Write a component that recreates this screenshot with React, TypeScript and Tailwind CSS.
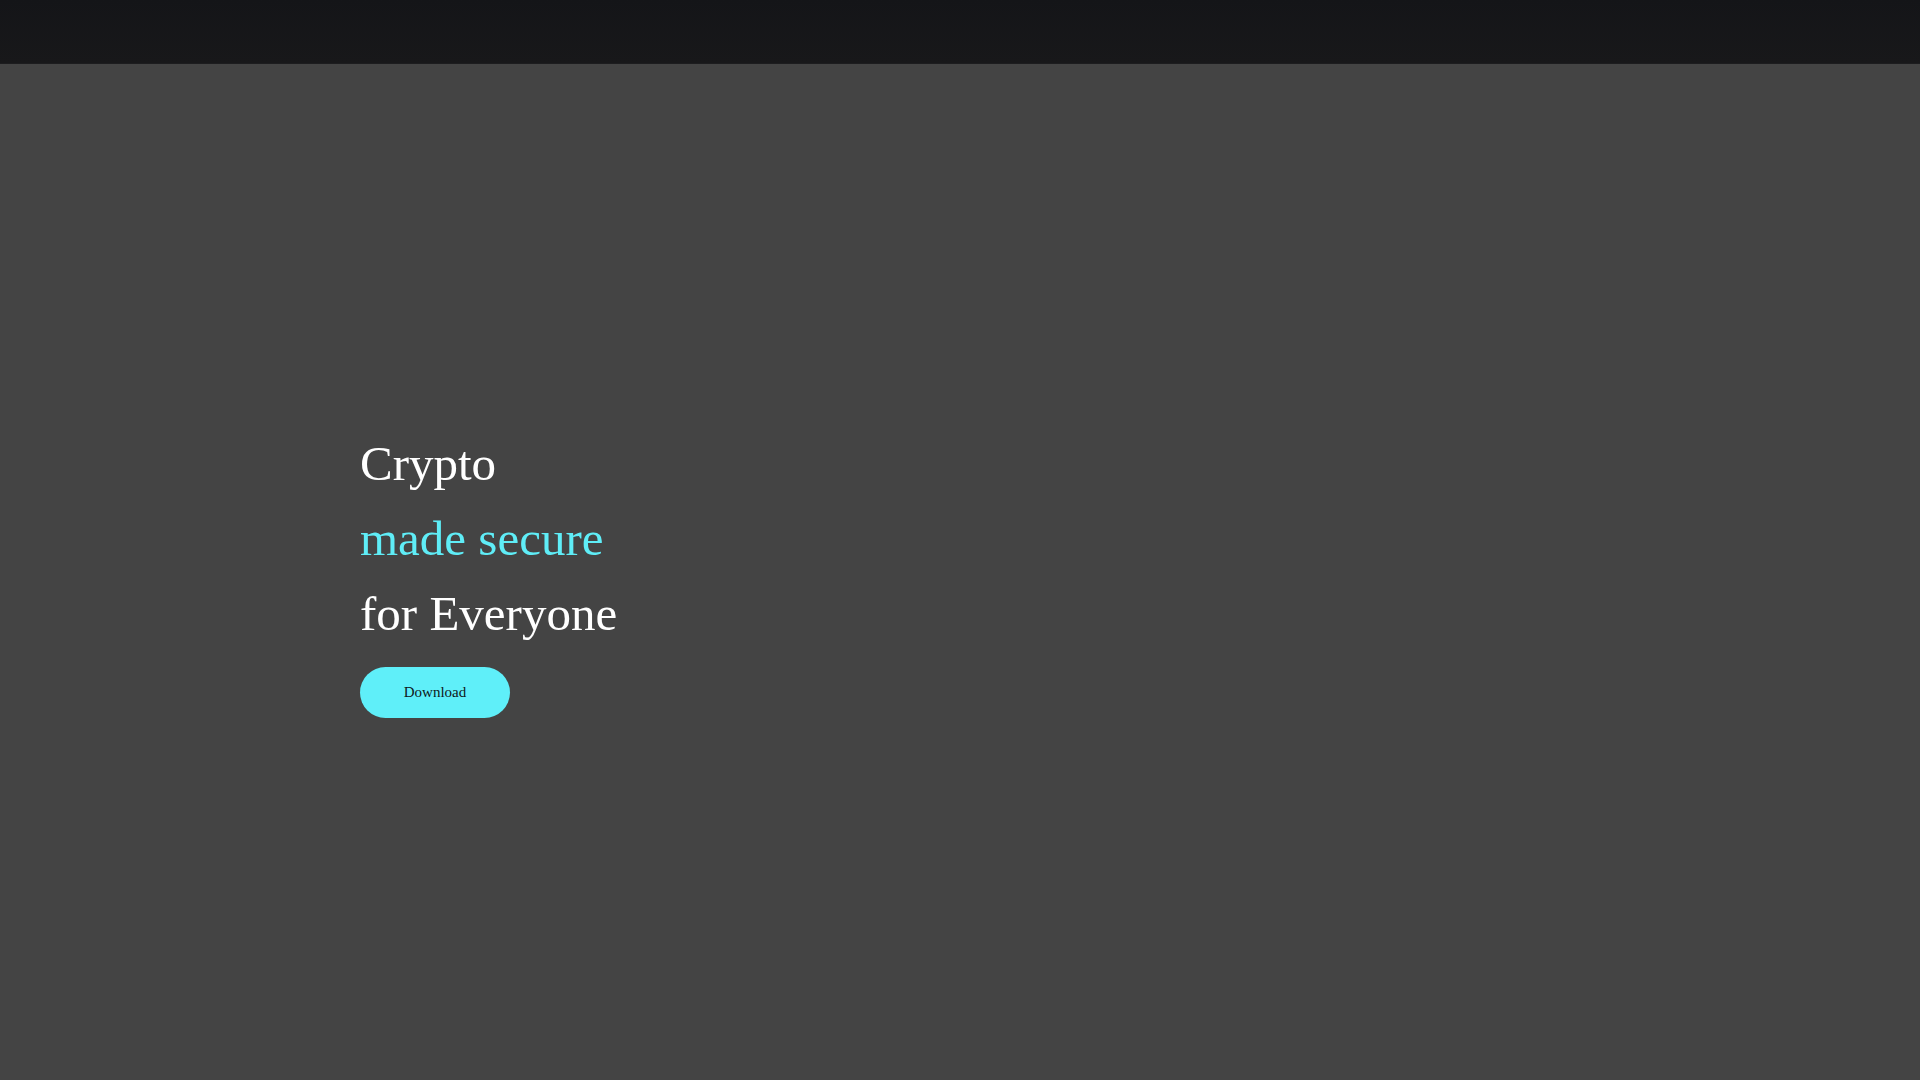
import React from "react";

export default function App() {
  return (
    <div
      className="min-h-screen flex flex-col bg-[#444444]"
      style={{ fontFamily: '"Liberation Serif", "Times New Roman", serif' }}
    >
      <header className="h-16 shrink-0 bg-gradient-to-b from-[#141518] to-[#18181a] border-b border-[#1d1d1f]" />
      <main className="flex-1 flex items-center px-[360px]">
        <div className="flex flex-col items-start">
          <h1 className="text-[49px] leading-[75px] font-normal">
            <span className="block text-white">Crypto</span>
            <span className="block text-[#5fedf7]">made secure</span>
            <span className="block text-white">for Everyone</span>
          </h1>
          <button className="mt-4 h-[51px] w-[150px] rounded-full bg-[#5fEFF9] text-[15px] text-[#0f1720] flex items-center justify-center">
            Download
          </button>
        </div>
      </main>
    </div>
  );
}
